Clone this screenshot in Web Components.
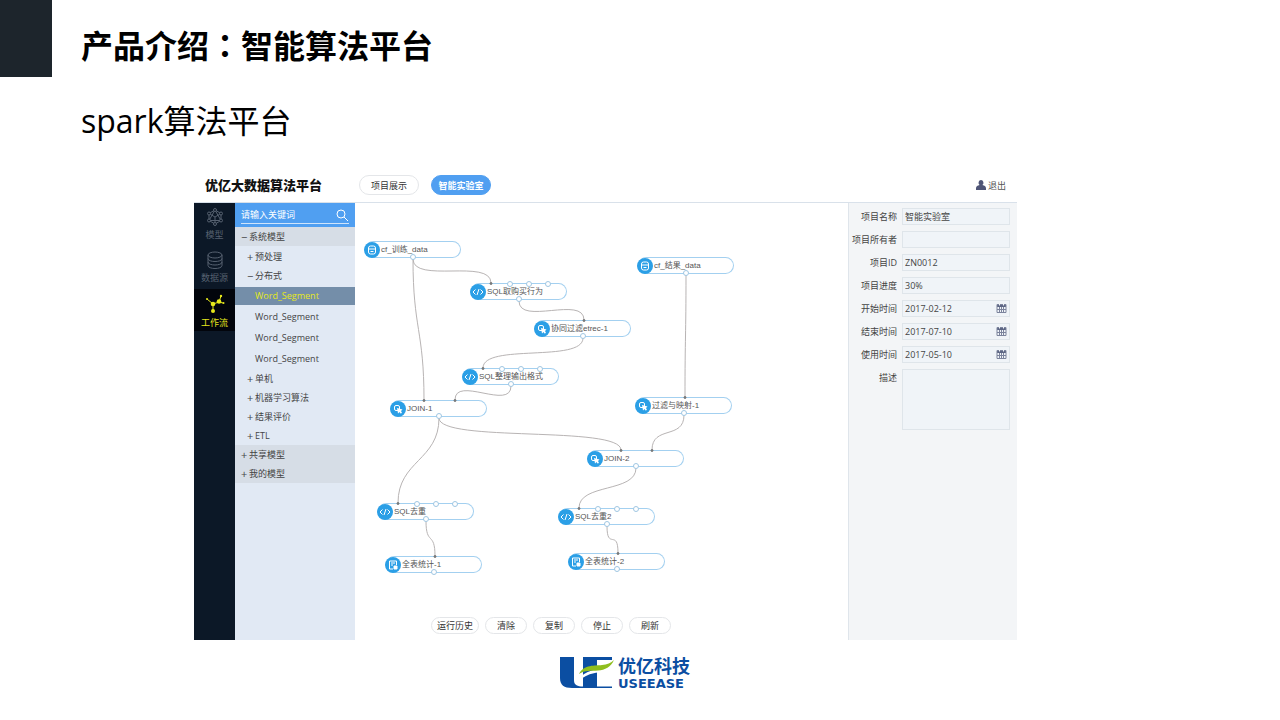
<!DOCTYPE html>
<html lang="zh-CN">
<head>
<meta charset="utf-8">
<title>产品介绍：智能算法平台</title>
<style>
  body { margin: 0; background: #fff; color: #333; font-family: "Open Sans", "Noto Sans CJK SC", sans-serif; }
</style>
</head>
<body>
<product-slide>
  <span slot="title">产品介绍<span style="font-family:'Noto Sans CJK TC',sans-serif" lang="zh-Hant">：</span>智能算法平台</span>
  <span slot="subtitle">spark算法平台</span>
  <algo-platform></algo-platform>
  <company-logo slot="footer"></company-logo>
</product-slide>

<script>
const define = (name, html, setup) => {
  const tpl = document.createElement('template');
  tpl.innerHTML = '<style>*{box-sizing:border-box}button,input,textarea{font:inherit;color:inherit;margin:0}</style>' + html;
  customElements.define(name, class extends HTMLElement {
    constructor() {
      super();
      this.attachShadow({ mode: 'open' }).appendChild(tpl.content.cloneNode(true));
    }
    connectedCallback() { if (setup) setup(this, this.shadowRoot); }
  });
};

/* Slide frame */
define('product-slide', `
<style>
  :host { display: block; }
  header { display: flex; gap: 29px; align-items: flex-start; }
  .block { width: 52px; height: 77px; background: #1d252c; flex: none; }
  h1, h2 { margin: 0; font-size: 32px; line-height: 48px; color: #000; }
  h1 { padding-top: 20px; font-weight: 700; }
  h2 { padding: 20px 0 0 81px; font-weight: 400; }
  main { margin: 23px 263px 0 194px; }
  footer { display: flex; justify-content: center; margin: 16px 30px 0 0; }
</style>
<header><div class="block"></div><h1><slot name="title"></slot></h1></header>
<h2><slot name="subtitle"></slot></h2>
<main><slot></slot></main>
<footer><slot name="footer"></slot></footer>`);

define('company-logo', `
<style>
  :host { display: flex; gap: 4px; color: #0b4ea2; }
  svg { width: 54px; height: 32px; margin-top: 1px; }
  .name { font: 700 18px/18px "Noto Sans CJK SC", sans-serif; }
  .latin { font: 700 13px/20px "DejaVu Sans", sans-serif; }
</style>
<svg viewBox="0 0 54 32" aria-hidden="true">
  <path fill="#0b4ea2" d="M0 0h14v23c0 4 2 6 7 6.500h3V31H12C4 31 0 28 0 21z"/>
  <path fill="#0b4ea2" d="M23 0h29v3H37v26.500h15V31H23z"/>
  <path fill="#fff" d="M19 22c5-8 18-10 34-14v4c-12 5-22 1-34 12z"/>
  <path fill="#8fbe1e" d="M19 17C24 7 35 9 42 8c5-.5 9-2 12-5-3 7-9 10-16 10.500-7 .5-13-.5-19 3.500z"/>
</svg>
<div><div class="name">优亿科技</div><div class="latin">USEEASE</div></div>`);

/* Application window */
define('algo-platform', `
<style>
  :host { display: block; font-size: 9px; line-height: 13px; }
  .body { display: grid; grid-template-columns: 41px 120px minmax(0, 1fr) 169px; min-height: 437px; }
</style>
<platform-bar></platform-bar>
<div class="body"><icon-rail></icon-rail><model-tree></model-tree><flow-canvas></flow-canvas><project-form></project-form></div>`);

define('platform-bar', `
<style>
  :host { display: flex; align-items: center; height: 35px; padding: 0 11px; border-bottom: 1px solid #d9e1ea; }
  .brand { font-size: 13px; line-height: 20px; font-weight: 900; color: #111; width: 154px; }
  nav { display: flex; gap: 12px; flex: 1; }
  button { height: 20px; min-width: 60px; padding: 0; border: 1px solid #e4e6e9; border-radius: 10px; background: #fff; }
  button.on { background: #509ff1; border-color: #509ff1; color: #fff; font-weight: 700; }
  a { display: flex; align-items: center; gap: 2px; color: #555; text-decoration: none; }
  svg { width: 10px; height: 10px; }
</style>
<div class="brand">优亿大数据算法平台</div>
<nav><button type="button">项目展示</button><button type="button" class="on">智能实验室</button></nav>
<a href="#"><svg viewBox="0 0 10 10" aria-hidden="true"><path fill="#4f5577" d="M5 0a2.500 2.800 0 0 1 1.400 5.100C8.500 5.500 10 6.500 10 8.200V10H0V8.200C0 6.500 1.500 5.500 3.600 5.100A2.500 2.800 0 0 1 5 0z"/></svg>退出</a>`);

define('icon-rail', `
<style>
  :host { display: block; background: #0c1827; }
  button { display: flex; flex-direction: column; align-items: center; gap: 1px; width: 100%; height: 43px; padding: 4px 0 0; border: 0; background: none; color: #566170; }
  button.on { background: #02050c; color: #e6e81c; height: 42px; gap: 3px; }
  svg { width: 20px; height: 20px; fill: none; stroke: currentColor; }
</style>
<button type="button"><svg viewBox="0 0 20 20" aria-hidden="true"><path d="M10 3l6 3.500v7L10 17l-6-3.500v-7zM4 6.500l6 3.500 6-3.500M10 10v7M4 13.500L10 3l6 10.500z"/><g fill="#0c1827"><circle cx="10" cy="3" r="1.500"/><circle cx="16" cy="6.500" r="1.500"/><circle cx="16" cy="13.500" r="1.500"/><circle cx="10" cy="17" r="1.500"/><circle cx="4" cy="13.500" r="1.500"/><circle cx="4" cy="6.500" r="1.500"/></g></svg>模型</button>
<button type="button"><svg viewBox="0 0 20 20" aria-hidden="true"><ellipse cx="10" cy="5" rx="7" ry="3"/><path d="M3 5v10.500c0 4 14 4 14 0V5M3 8.500c0 4 14 4 14 0M3 12c0 4 14 4 14 0"/></svg>数据源</button>
<button type="button" class="on"><svg viewBox="0 0 20 20" aria-hidden="true"><path d="M2 6l6 5 6-2 2-6M14 9l4 1M8 11v7"/><g fill="currentColor" stroke="none"><circle cx="2" cy="6" r="1"/><circle cx="8" cy="11" r="2.300"/><circle cx="14" cy="8.500" r="2.300"/><circle cx="16" cy="3" r="1.200"/><circle cx="18.500" cy="10" r="1"/><circle cx="8" cy="18" r="2"/></g></svg>工作流</button>`);

define('model-tree', `
<style>
  :host { display: block; background: #e1e9f4; color: #444; }
  form { display: flex; height: 24px; padding: 0 6px; background: #509ff1; align-items: center; }
  label { display: flex; align-items: center; flex: 1; min-width: 0; height: 17px; border-bottom: 1px solid #cfe4fb; }
  input { flex: 1; width: 0; min-width: 0; padding: 0; border: 0; background: none; outline: 0; color: #fff; }
  input::placeholder { color: #fff; opacity: 1; }
  svg { width: 14px; height: 14px; fill: none; stroke: #fff; flex: none; }
  button { display: flex; align-items: center; gap: 2px; width: 100%; height: 19px; padding: 0 0 1px 12px; border: 0; background: none; text-align: left; }
  button::before { content: "+"; width: 6px; font-size: 11px; }
  button.open::before { content: "−"; }
  button.top { background: #d6dde6; padding-left: 6px; }
  .group { padding-top: 1px; }
  .leaves { display: grid; gap: 3px; padding: 2px 0 1px; }
  .leaves button { height: 18px; padding-left: 20px; }
  .leaves button::before { content: none; }
  .leaves .on { background: #748ea9; color: #e6e81c; }
</style>
<form><label><input aria-label="搜索" placeholder="请输入关键词"><svg viewBox="0 0 14 14" aria-hidden="true"><circle cx="6" cy="6" r="4"/><path d="M9 9l4 4"/></svg></label></form>
<button type="button" class="top open">系统模型</button>
<div class="group">
  <button type="button">预处理</button>
  <button type="button" class="open">分布式</button>
  <div class="leaves">
    <button type="button" class="on">Word_Segment</button><button type="button">Word_Segment</button><button type="button">Word_Segment</button><button type="button">Word_Segment</button>
  </div>
  <button type="button">单机</button><button type="button">机器学习算法</button><button type="button">结果评价</button><button type="button">ETL</button>
</div>
<button type="button" class="top">共享模型</button>
<button type="button" class="top">我的模型</button>`);

/* Workflow diagram */
const NODE_ICONS = {
  data: '<rect x="4.500" y="4" width="7" height="8" rx="2"/><path d="M4.500 7h7M6.500 9.500h3"/>',
  code: '<path d="M5.500 5.500L3 8l2.500 2.500M10.500 5.500L13 8l-2.500 2.500M9 5l-2 6"/>',
  join: '<rect x="4.500" y="4.500" width="5" height="5" rx="1.500"/><path fill="#fff" stroke="none" d="M7 7l5.500 1.500-1.500 1.500 1 2-1.500.5-1-1.500L8 12.500z"/>',
  stat: '<path d="M11.500 8V4h-7v8H8M6 6h4M6 8h2"/><path fill="#fff" d="M9 9h3v3H9z"/>'
};
define('flow-node', `
<style>
  :host { position: absolute; display: flex; align-items: center; gap: 1px; width: 96px; height: 17px; border: 1px solid #a3d0f0; border-left-color: transparent; border-radius: 9px; background: #fff; font: 8px/12px "Liberation Sans", "Noto Sans CJK SC", sans-serif; color: #555; white-space: nowrap; }
  .icon { width: 16px; height: 16px; margin-left: -2px; flex: none; fill: none; stroke: #fff; }
  i { position: absolute; width: 6px; height: 6px; border: 1px solid #9fc6e2; border-radius: 50%; background: #fff; transform: translateX(-50%); }
  i.in { top: -3px; } i.out { bottom: -3px; }
  i.used { width: 3px; height: 3px; top: -2px; background: #777; border-color: #777; }
</style>
<svg class="icon" viewBox="0 0 16 16" aria-hidden="true"></svg><slot></slot>`, (host, root) => {
  root.querySelector('svg').innerHTML = '<circle cx="8" cy="8" r="8" fill="#2b9fe6" stroke="none"/>' + NODE_ICONS[host.getAttribute('icon')];
  const port = (cls, x) => {
    const p = document.createElement('i');
    p.className = cls; p.style.left = x + 'px'; root.append(p);
  };
  const ins = (host.getAttribute('inputs') || '').split(',').filter(Boolean);
  ins.forEach((x, k) => port(ins.length < 4 || k === 0 ? 'in used' : 'in', x));
  port('out', 47);
});

const FOUR = '19,38,57,76', TWO = '32,63', ONE = '48';
const NODES = [
  ['data', 'cf_训练_data', 10, 38, ''],
  ['code', 'SQL取购买行为', 116, 80, FOUR],
  ['join', '协同过滤etrec-1', 180, 117, ONE],
  ['code', 'SQL整理输出格式', 108, 165, FOUR],
  ['join', 'JOIN-1', 36, 197, TWO],
  ['data', 'cf_结果_data', 283, 54, ''],
  ['join', '过滤与映射-1', 281, 194, ONE],
  ['join', 'JOIN-2', 233, 247, TWO],
  ['code', 'SQL去重', 23, 300, FOUR],
  ['code', 'SQL去重2', 204, 305, FOUR],
  ['stat', '全表统计-1', 31, 353, ONE],
  ['stat', '全表统计-2', 214, 350, ONE]
];
/* [from node, to node, index of the input port] */
const EDGES = [[0, 1, 0], [0, 4, 0], [1, 2, 0], [2, 3, 0], [3, 4, 1], [4, 8, 0], [4, 7, 0], [5, 6, 0], [6, 7, 1], [7, 9, 0], [8, 10, 0], [9, 11, 0]];

define('flow-canvas', `
<style>
  :host { position: relative; display: flex; align-items: flex-end; min-height: 437px; overflow: hidden; background: #fff; }
  .edges { position: absolute; inset: 0; width: 100%; height: 100%; fill: none; stroke: #b8b4b4; }
  .tools { display: flex; gap: 6px; padding: 0 0 6px 76px; }
  button { min-width: 42px; height: 17px; padding: 0 5px; border: 1px solid #e4e6e9; border-radius: 9px; background: #fff; line-height: 13px; }
</style>
<svg class="edges" aria-hidden="true"></svg>
<div class="tools"><button type="button">运行历史</button><button type="button">清除</button><button type="button">复制</button><button type="button">停止</button><button type="button">刷新</button></div>`, (host, root) => {
  root.querySelector('.edges').innerHTML = EDGES.map(([a, b, k]) => {
    const A = NODES[a], B = NODES[b];
    const x1 = A[2] + 48, y1 = A[3] + 18, x2 = B[2] + 1 + Number(B[4].split(',')[k]), y2 = B[3];
    const c = Math.max(25, (y2 - y1) / 2);
    return `<path d="M${x1} ${y1}C${x1} ${y1 + c} ${x2} ${y2 - c} ${x2} ${y2}"/>`;
  }).join('');
  NODES.forEach(([icon, label, x, y, inputs]) => {
    const n = document.createElement('flow-node');
    n.setAttribute('icon', icon); n.setAttribute('inputs', inputs);
    n.style.left = x + 'px'; n.style.top = y + 'px';
    n.textContent = label; root.append(n);
  });
});

/* Project properties */
define('project-form', `
<style>
  :host { display: block; background: #f3f5f7; border-left: 1px solid #dfe5eb; padding: 5px 7px 5px 3px; color: #444; }
  form { display: grid; gap: 6px; }
  .row { display: grid; grid-template-columns: 1fr 108px; gap: 5px; line-height: 17px; text-align: right; white-space: nowrap; }
  .box { display: flex; align-items: center; height: 17px; padding: 0 2px; border: 1px solid #dfe5ea; background: #f0f4f8; }
  input { flex: 1; min-width: 0; padding: 0; border: 0; background: none; }
  textarea { display: block; height: 61px; padding: 2px; border: 1px solid #dfe5ea; border-radius: 0; background: #f0f4f8; resize: none; }
  svg { width: 11px; height: 11px; flex: none; }
</style>
<form></form>`, (host, root) => {
  const cal = '<svg viewBox="0 0 11 11" aria-hidden="true"><path fill="#5d6684" d="M1 1h9v3H1z"/><path fill="none" stroke="#7c849d" d="M1 1.500h9v8H1zM1 6.500h9M3.500 4v6M5.500 4v6M7.500 4v6"/><path stroke="#f0f4f8" d="M3.500 1v1.500M7.500 1v1.500"/></svg>';
  const rows = [['项目名称', '智能实验室'], ['项目所有者', ''], ['项目ID', 'ZN0012'], ['项目进度', '30%'], ['开始时间', '2017-02-12', cal], ['结束时间', '2017-07-10', cal], ['使用时间', '2017-05-10', cal]];
  root.querySelector('form').innerHTML = rows.map(([l, v, icon = ''], k) =>
    `<div class="row"><label for="f${k}">${l}</label><div class="box"><input id="f${k}" value="${v}">${icon}</div></div>`).join('') +
    '<div class="row"><label for="desc">描述</label><textarea id="desc"></textarea></div>';
});
</script>
</body>
</html>
